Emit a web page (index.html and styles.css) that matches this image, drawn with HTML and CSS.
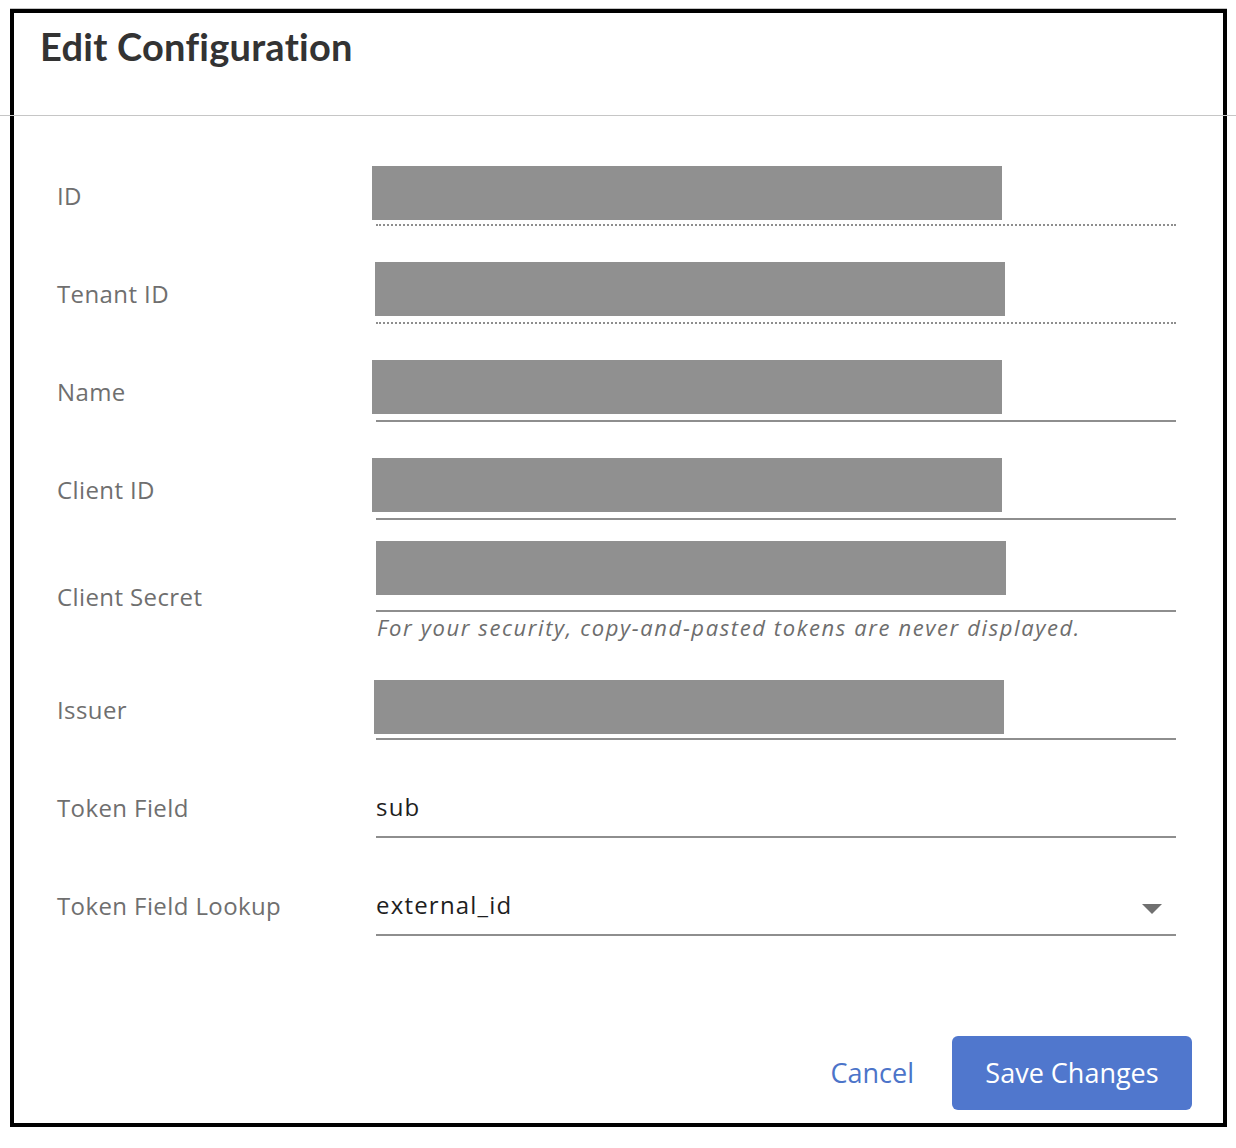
FILE: index.html
```html
<!DOCTYPE html>
<html lang="en">
<head>
<meta charset="utf-8">
<title>Edit Configuration</title>
<link rel="stylesheet" href="styles.css">
</head>
<body>
<div class="frame">
  <header class="modal-header">
    <h1 class="modal-title">Edit Configuration</h1>
  </header>
  <form class="form">
    <div class="form-group">
      <label class="form-label">ID</label>
      <div class="control">
        <div class="input input--readonly"><span class="redact redact--id"></span></div>
      </div>
    </div>
    <div class="form-group">
      <label class="form-label">Tenant ID</label>
      <div class="control">
        <div class="input input--readonly"><span class="redact redact--tenant"></span></div>
      </div>
    </div>
    <div class="form-group">
      <label class="form-label">Name</label>
      <div class="control">
        <div class="input"><span class="redact redact--name"></span></div>
      </div>
    </div>
    <div class="form-group">
      <label class="form-label">Client ID</label>
      <div class="control">
        <div class="input"><span class="redact redact--client"></span></div>
      </div>
    </div>
    <div class="form-group form-group--secret">
      <label class="form-label">Client Secret</label>
      <div class="control">
        <div class="input"><span class="redact redact--secret"></span></div>
        <p class="helper">For your security, copy-and-pasted tokens are never displayed.</p>
      </div>
    </div>
    <div class="form-group">
      <label class="form-label">Issuer</label>
      <div class="control">
        <div class="input"><span class="redact redact--issuer"></span></div>
      </div>
    </div>
    <div class="form-group">
      <label class="form-label">Token Field</label>
      <div class="control">
        <div class="input"><span class="value">sub</span></div>
      </div>
    </div>
    <div class="form-group">
      <label class="form-label">Token Field Lookup</label>
      <div class="control">
        <div class="input input--select">
          <span class="value">external_id</span>
          <svg class="caret" width="20" height="10" viewBox="0 0 20 10" aria-hidden="true"><polygon points="0,0 20,0 10,10" fill="#707070"/></svg>
        </div>
      </div>
    </div>
  </form>
  <footer class="modal-footer">
    <button type="button" class="btn btn-link">Cancel</button>
    <button type="button" class="btn btn-primary">Save Changes</button>
  </footer>
</div>
</body>
</html>
```

FILE: styles.css
```css
html, body {
  margin: 0;
  padding: 0;
  background: #fff;
}

body {
  font-family: "Open Sans", "Noto Sans", sans-serif;
  overflow: hidden;
}

.frame {
  box-sizing: border-box;
  margin: 9px 0 0 10px;
  width: 1217px;
  height: 1118px;
  border: 4px solid #000;
  box-shadow: 0 -1px 0 #c4c4c4, 0 1px 0 #9a9a9a;
  display: flex;
  flex-direction: column;
}

.modal-header {
  margin: 0 -13px 0 -14px;
  padding: 10px 0 46px 40px;
  border-bottom: 1px solid #c6c6c6;
}

.modal-title {
  margin: 0;
  font-family: "Lato", "Open Sans", sans-serif;
  font-weight: 700;
  font-size: 38px;
  line-height: 46px;
  color: #333333;
  letter-spacing: 0.25px;
}

.form {
  padding: 50px 0 0 43px;
  display: flex;
  flex-direction: column;
  gap: 38px;
}

.form-group {
  display: grid;
  grid-template-columns: 319px 800px;
  align-items: center;
}

.form-group--secret {
  margin-top: -6px;
}

.form-label {
  font-size: 24px;
  line-height: 32px;
  letter-spacing: 0.4px;
  color: #6f6f6f;
}

.control {
  display: flex;
  flex-direction: column;
}

.input {
  position: relative;
  box-sizing: border-box;
  height: 60px;
  border-bottom: 2px solid #8e8e8e;
  display: flex;
  align-items: center;
}

.input--readonly {
  border-bottom: 2px dotted #8e8e8e;
}

.input--select {
  justify-content: space-between;
  padding-right: 14px;
}

.value {
  font-size: 24px;
  line-height: 32px;
  letter-spacing: 1.2px;
  color: #1e1e1e;
}

.caret {
  display: block;
  margin-top: 7px;
}

.redact {
  position: absolute;
  width: 630px;
  height: 54px;
  background: #909090;
}

.redact--id { left: -4px; top: 0; }
.redact--tenant { left: -1px; top: -2px; }
.redact--name { left: -4px; top: -2px; }
.redact--client { left: -4px; top: -2px; }
.redact--secret { left: 0; top: -11px; }
.redact--issuer { left: -2px; top: 0; }

.helper {
  margin: 0;
  padding-left: 1px;
  font-size: 22px;
  font-style: italic;
  line-height: 30px;
  letter-spacing: 1.6px;
  color: #6d6d6d;
}

.modal-footer {
  margin-top: auto;
  padding: 0 31px 13px 0;
  display: flex;
  justify-content: flex-end;
  align-items: center;
  gap: 22px;
}

.btn {
  font-family: "Open Sans", "Noto Sans", sans-serif;
  font-size: 27px;
  line-height: 36px;
  border: 0;
  cursor: pointer;
}

.btn-link {
  background: transparent;
  color: #4c74c9;
  padding: 0 16px;
}

.btn-primary {
  height: 74px;
  width: 240px;
  padding: 0;
  background: #5077cd;
  color: #ffffff;
  border-radius: 6px;
}
```
